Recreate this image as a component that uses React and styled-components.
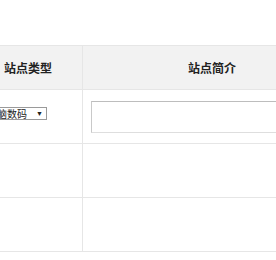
import React from "react";
import styled, { createGlobalStyle } from "styled-components";

const GlobalStyle = createGlobalStyle`
  html, body {
    margin: 0;
    padding: 0;
    background: #ffffff;
    overflow: hidden;
  }
  body {
    font-family: "Liberation Sans", "Noto Sans CJK SC", sans-serif;
    color: #333;
  }
`;

const Page = styled.div`
  width: 276px;
  height: 260px;
  padding-top: 45px;
  box-sizing: border-box;
  overflow: hidden;
`;

const Table = styled.table`
  border-collapse: collapse;
  table-layout: fixed;
  margin-left: -27px;
  width: 366px;
`;

const HeadCell = styled.th`
  height: 43px;
  padding: 0;
  background: #f2f2f2;
  border: 1px solid #e6e6e6;
  font-family: "Noto Sans CJK SC", sans-serif;
  font-size: 12px;
  font-weight: bold;
  color: #222;
  text-align: center;
  width: ${(p) => p.$w}px;
`;

const Cell = styled.td`
  height: 54px;
  padding: 0 0 ${(p) => p.$padBottom || 0}px ${(p) => p.$pad || 0}px;
  border: 1px solid #e6e6e6;
  vertical-align: middle;
  box-sizing: border-box;
`;

const SelectBox = styled.div`
  display: flex;
  width: fit-content;
  align-items: center;
  height: 13px;
  border: 1px solid #9a9a9a;
  background: #fff;
  box-sizing: border-box;
`;

const Select = styled.select`
  appearance: none;
  border: none;
  outline: none;
  background: transparent;
  font-family: "Noto Sans CJK SC", sans-serif;
  font-size: 10px;
  line-height: 11px;
  height: 11px;
  padding: 0 0 0 1px;
  margin: 0;
  color: #222;
  width: 42px;
`;

const Arrow = styled.span`
  font-size: 7px;
  line-height: 11px;
  color: #222;
  padding: 0 3px 0 8px;
`;

const TextInput = styled.input`
  display: block;
  width: 300px;
  height: 32px;
  box-sizing: border-box;
  border: 1px solid #c9c9c9;
  border-top-color: #bdbdbd;
  border-bottom-color: #dedede;
  margin: 0;
  padding: 0 6px;
  outline: none;
`;

export default function App() {
  return (
    <>
      <GlobalStyle />
      <Page>
        <Table>
          <thead>
            <tr>
              <HeadCell $w={108}>站点类型</HeadCell>
              <HeadCell $w={258}>站点简介</HeadCell>
            </tr>
          </thead>
          <tbody>
            <tr>
              <Cell $pad={11} $padBottom={6}>
                <SelectBox>
                  <Select defaultValue="pc">
                    <option value="pc">电脑数码</option>
                  </Select>
                  <Arrow>▼</Arrow>
                </SelectBox>
              </Cell>
              <Cell $pad={8}>
                <TextInput type="text" />
              </Cell>
            </tr>
            <tr>
              <Cell />
              <Cell />
            </tr>
            <tr>
              <Cell />
              <Cell />
            </tr>
          </tbody>
        </Table>
      </Page>
    </>
  );
}
